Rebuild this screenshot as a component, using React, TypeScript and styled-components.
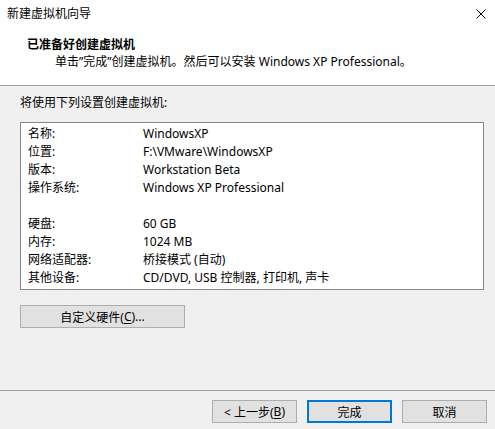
import React from 'react'
import styled, { createGlobalStyle } from 'styled-components'

const GlobalStyle = createGlobalStyle`
    html, body {
        margin: 0;
        padding: 0;
        background: #f0f0f0;
    }
    body {
        font-family: "Noto Sans", "Noto Sans CJK SC", sans-serif;
        font-size: 12px;
        color: #000;
    }
`

interface Setting {
    label: string
    value: string
}

const settings: (Setting | null)[] = [
    { label: '名称:', value: 'WindowsXP' },
    { label: '位置:', value: 'F:\\VMware\\WindowsXP' },
    { label: '版本:', value: 'Workstation Beta' },
    { label: '操作系统:', value: 'Windows XP Professional' },
    null,
    { label: '硬盘:', value: '60 GB' },
    { label: '内存:', value: '1024 MB' },
    { label: '网络适配器:', value: '桥接模式 (自动)' },
    { label: '其他设备:', value: 'CD/DVD, USB 控制器, 打印机, 声卡' },
]

const CloseIcon: React.FC = () => (
    <svg width="10" height="10" viewBox="0 0 10 10">
        <path d="M0.5 0.5 L9.5 9.5 M9.5 0.5 L0.5 9.5" stroke="#000" strokeWidth="1" fill="none" />
    </svg>
)

const App: React.FC = () => {
    return (
        <Wizard>
            <GlobalStyle />
            <Top>
                <TitleBar>
                    <span>新建虚拟机向导</span>
                    <CloseButton><CloseIcon /></CloseButton>
                </TitleBar>
                <Header>
                    <h1>已准备好创建虚拟机</h1>
                    <p>单击”完成”创建虚拟机。然后可以安装 Windows XP Professional。</p>
                </Header>
            </Top>

            <Body>
                <Intro>将使用下列设置创建虚拟机:</Intro>
                <SummaryList>
                    {settings.map((item, i) => item ? (
                        <SummaryRow key={i}>
                            <span className="label">{item.label}</span>
                            <span className="value">{item.value}</span>
                        </SummaryRow>
                    ) : (
                        <SummaryRow key={i} />
                    ))}
                </SummaryList>
                <Button width={165}>自定义硬件(<u>C</u>)...</Button>
            </Body>

            <Footer>
                <Button width={85}>&lt; 上一步(<u>B</u>)</Button>
                <Button width={85} primary>完成</Button>
                <Button width={85}>取消</Button>
            </Footer>
        </Wizard>
    )
}

const Wizard = styled.div`
    width: 495px;
    height: 429px;
    display: flex;
    flex-direction: column;
    background: #f0f0f0;
    overflow: hidden;
`

const Top = styled.header`
    background: #fff;
    border-bottom: 1px solid #a0a0a0;
    padding-bottom: 15px;
`

const TitleBar = styled.div`
    height: 28px;
    display: flex;
    align-items: center;
    justify-content: space-between;
    padding: 0 9px 0 7px;
    line-height: 28px;
`

const CloseButton = styled.span`
    display: flex;
    align-items: center;
    width: 10px;
    height: 10px;
`

const Header = styled.div`
    padding: 9px 0 0 27px;

    h1 {
        margin: 0;
        font-size: 12px;
        font-weight: 700;
        line-height: 16px;
    }

    p {
        margin: 1px 0 0 28px;
        line-height: 16px;
    }
`

const Body = styled.main`
    flex: 1;
    padding: 9px 11px 0 20px;
`

const Intro = styled.div`
    line-height: 16px;
`

const SummaryList = styled.div`
    margin-top: 11px;
    height: 168px;
    box-sizing: border-box;
    background: #fff;
    border: 1px solid #828790;
    padding: 2px 0 0 7px;
`

const SummaryRow = styled.div`
    display: flex;
    height: 18px;
    line-height: 18px;
    white-space: nowrap;

    .label {
        width: 115px;
        flex-shrink: 0;
    }
`

const Button = styled.button<{ width: number; primary?: boolean }>`
    width: ${p => p.width}px;
    height: 23px;
    box-sizing: border-box;
    margin: 0;
    padding: 0;
    font: inherit;
    font-size: 12px;
    color: #000;
    background: #e1e1e1;
    border: ${p => p.primary ? '2px solid #0078d7' : '1px solid #adadad'};
    display: flex;
    align-items: center;
    justify-content: center;

    ${Body} & {
        margin-top: 15px;
    }

    u {
        text-underline-offset: 2px;
    }
`

const Footer = styled.footer`
    border-top: 1px solid #a0a0a0;
    height: 39px;
    box-sizing: border-box;
    padding: 9px 8px 0 0;
    display: flex;
    justify-content: flex-end;
    gap: 10px;
`

export default App
